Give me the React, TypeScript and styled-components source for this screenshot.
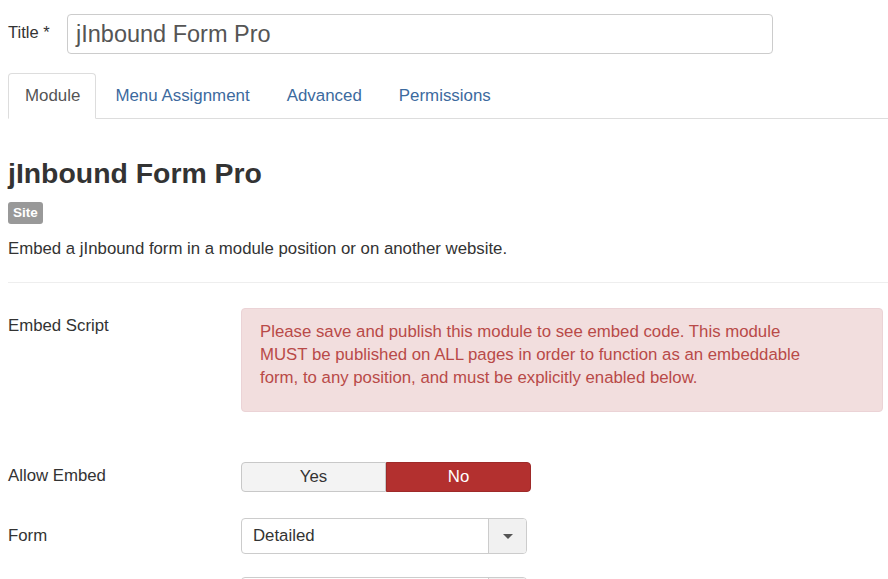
import React from 'react';
import styled, { createGlobalStyle } from 'styled-components';

const GlobalStyle = createGlobalStyle`
  html, body {
    margin: 0;
    padding: 0;
    background: #fff;
  }
  body {
    font-family: "Liberation Sans", Arial, sans-serif;
    color: #333;
    overflow: hidden;
  }
`;

const Page = styled.div`
  padding: 14px 0 0 8px;
`;

const TitleRow = styled.div`
  display: flex;
  align-items: center;
  gap: 12px;
  margin-bottom: 19px;

  label {
    font-size: 16.5px;
    color: #333;
    width: 47px;
    margin-top: -4px;
  }
`;

const TitleInput = styled.div`
  width: 706px;
  height: 40px;
  box-sizing: border-box;
  border: 1px solid #ccc;
  border-radius: 4px;
  padding: 0 8px;
  display: flex;
  align-items: center;
  font-size: 23.5px;
  color: #555;
`;

const Tabs = styled.ul`
  list-style: none;
  margin: 0;
  padding: 0;
  display: flex;
  border-bottom: 1px solid #ddd;
  height: 45px;
`;

const Tab = styled.li<{ $active?: boolean }>`
  box-sizing: border-box;
  padding: 0 15px 0 16px;
  margin-right: ${p => (p.$active ? '2px' : '4px')};
  display: flex;
  align-items: center;
  font-size: 16.9px;
  color: ${p => (p.$active ? '#555' : '#3c6a9e')};
  background: #fff;
  border: 1px solid ${p => (p.$active ? '#ddd' : 'transparent')};
  border-bottom: ${p => (p.$active ? '1px solid #fff' : 'none')};
  border-radius: 4px 4px 0 0;
  height: ${p => (p.$active ? '46px' : '45px')};
`;

const Heading = styled.h1`
  margin: 37px 0 12px;
  font-size: 28.4px;
  line-height: 34px;
  font-weight: bold;
  color: #333;
`;

const Badge = styled.div`
  width: fit-content;
  background: #999;
  color: #fff;
  font-size: 13.5px;
  font-weight: bold;
  line-height: 22px;
  padding: 0 5px;
  border-radius: 3px;
`;

const Description = styled.p`
  margin: 15px 0 0;
  font-size: 16.8px;
  line-height: 20px;
  color: #333;
`;

const Divider = styled.hr`
  border: 0;
  border-top: 1px solid #eee;
  margin: 23px 0 25px;
`;

const Row = styled.div<{ $gap?: number }>`
  display: flex;
  align-items: flex-start;
  margin-bottom: ${p => p.$gap ?? 25}px;
`;

const Label = styled.div<{ $pad?: number }>`
  width: 233px;
  flex-shrink: 0;
  font-size: 16.8px;
  color: #333;
  padding-top: ${p => p.$pad ?? 8}px;
  line-height: 20px;
`;

const Alert = styled.div`
  width: 642px;
  box-sizing: border-box;
  background: #f2dede;
  border: 1px solid #ebd3d6;
  border-radius: 4px;
  color: #b94a48;
  font-size: 16.8px;
  line-height: 23px;
  padding: 11px 61px 22px 18px;
`;

const Toggle = styled.div`
  display: flex;
  width: 290px;
  height: 30px;
`;

const ToggleButton = styled.div<{ $on?: boolean; $side: 'left' | 'right' }>`
  flex: 1;
  display: flex;
  align-items: center;
  justify-content: center;
  font-size: 16.8px;
  box-sizing: border-box;
  color: ${p => (p.$on ? '#fff' : '#333')};
  background: ${p => (p.$on ? '#b3302f' : '#f3f3f3')};
  border: 1px solid ${p => (p.$on ? '#9e2a29' : '#c8c8c8')};
  border-radius: ${p => (p.$side === 'left' ? '4px 0 0 4px' : '0 4px 4px 0')};
`;

const Select = styled.div`
  width: 286px;
  height: 36px;
  box-sizing: border-box;
  border: 1px solid #ccc;
  border-radius: 4px;
  display: flex;
  overflow: hidden;
`;

const SelectValue = styled.div`
  flex: 1;
  display: flex;
  align-items: center;
  padding-left: 11px;
  font-size: 16.8px;
  color: #333;
`;

const SelectCaret = styled.div`
  width: 37px;
  background: #f1f1f1;
  border-left: 1px solid #ccc;
  display: flex;
  align-items: center;
  justify-content: center;

  &::after {
    content: '';
    border-left: 5px solid transparent;
    border-right: 5px solid transparent;
    border-top: 5px solid #555;
  }
`;

const App: React.FC = () => {
  return (
    <Page>
      <GlobalStyle />
      <TitleRow>
        <label>Title *</label>
        <TitleInput>jInbound Form Pro</TitleInput>
      </TitleRow>

      <Tabs>
        <Tab $active>Module</Tab>
        <Tab>Menu Assignment</Tab>
        <Tab>Advanced</Tab>
        <Tab>Permissions</Tab>
      </Tabs>

      <Heading>jInbound Form Pro</Heading>
      <Badge>Site</Badge>
      <Description>Embed a jInbound form in a module position or on another website.</Description>
      <Divider />

      <Row $gap={50}>
        <Label>Embed Script</Label>
        <Alert>
          Please save and publish this module to see embed code. This module MUST be published on ALL pages
          in order to function as an embeddable form, to any position, and must be explicitly enabled below.
        </Alert>
      </Row>

      <Row $gap={26}>
        <Label $pad={4}>Allow Embed</Label>
        <Toggle>
          <ToggleButton $side="left">Yes</ToggleButton>
          <ToggleButton $side="right" $on>No</ToggleButton>
        </Toggle>
      </Row>

      <Row $gap={23}>
        <Label $pad={8}>Form</Label>
        <Select>
          <SelectValue>Detailed</SelectValue>
          <SelectCaret />
        </Select>
      </Row>

      <Row>
        <Label />
        <Select>
          <SelectValue />
          <SelectCaret />
        </Select>
      </Row>
    </Page>
  );
};

export default App;
